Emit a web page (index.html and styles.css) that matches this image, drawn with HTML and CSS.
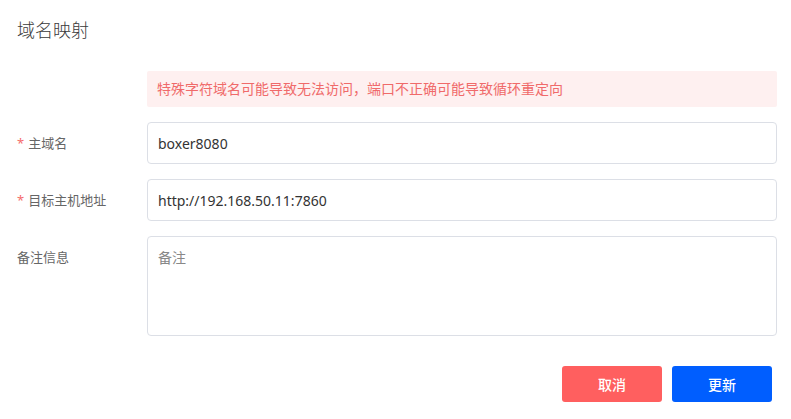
FILE: index.html
```html
<!DOCTYPE html>
<html lang="zh-CN">
<head>
<meta charset="utf-8">
<title>域名映射</title>
<link rel="stylesheet" href="styles.css">
</head>
<body>
<div class="dialog">
  <h1 class="title">域名映射</h1>
  <form class="form">
    <div class="row">
      <div class="label"></div>
      <div class="field">
        <div class="alert">特殊字符域名可能导致无法访问，端口不正确可能导致循环重定向</div>
      </div>
    </div>
    <div class="row">
      <label class="label"><span class="req">*</span>主域名</label>
      <div class="field"><input class="input" type="text" value="boxer8080"></div>
    </div>
    <div class="row">
      <label class="label"><span class="req">*</span>目标主机地址</label>
      <div class="field"><input class="input" type="text" value="http://192.168.50.11:7860"></div>
    </div>
    <div class="row top">
      <label class="label label-top">备注信息</label>
      <div class="field"><textarea class="textarea" placeholder="备注"></textarea></div>
    </div>
    <div class="actions">
      <button type="button" class="btn btn-cancel">取消</button>
      <button type="button" class="btn btn-primary">更新</button>
    </div>
  </form>
</div>
</body>
</html>
```

FILE: styles.css
```css
* { box-sizing: border-box; }
html, body {
  margin: 0;
  padding: 0;
  background: #fff;
  font-family: "Noto Sans", "Noto Sans CJK SC", sans-serif;
}
.dialog {
  width: 791px;
  padding: 17px 14px 0 17px;
}
.title {
  margin: 0;
  font-size: 18px;
  font-weight: 300;
  line-height: 26px;
  color: #3a3a3a;
}
.form {
  margin-top: 28px;
  display: flex;
  flex-direction: column;
  gap: 15px;
}
.row {
  display: flex;
  align-items: center;
}
.row.top { align-items: flex-start; }
.label {
  width: 130px;
  flex: none;
  font-size: 13px;
  color: #666;
  line-height: 20px;
}
.label-top { padding-top: 11px; }
.req {
  color: #f56c6c;
  margin-right: 4px;
}
.field { flex: 1; }
.alert {
  height: 36px;
  line-height: 36px;
  padding: 0 10px;
  background: #fef0f0;
  color: #f06a6a;
  font-size: 14px;
  border-radius: 2px;
}
.input, .textarea {
  display: block;
  width: 100%;
  border: 1px solid #dcdfe6;
  border-radius: 4px;
  font-family: "Noto Sans", "Noto Sans CJK SC", sans-serif;
  font-size: 14px;
  color: #333;
  padding: 0 10px;
  outline: none;
  background: #fff;
}
.input { height: 42px; }
.textarea {
  height: 100px;
  padding: 10px 10px;
  line-height: 22px;
  resize: none;
}
.textarea::placeholder { color: #888; }
.actions {
  display: flex;
  justify-content: flex-end;
  gap: 10px;
  margin-top: 15px;
  padding-right: 5px;
}
.btn {
  width: 100px;
  height: 36px;
  border: none;
  border-radius: 3px;
  color: #fff;
  font-family: "Noto Sans", "Noto Sans CJK SC", sans-serif;
  font-size: 14px;
  font-weight: 500;
}
.btn-cancel { background: #ff5f5f; }
.btn-primary { background: #005eff; }
```
